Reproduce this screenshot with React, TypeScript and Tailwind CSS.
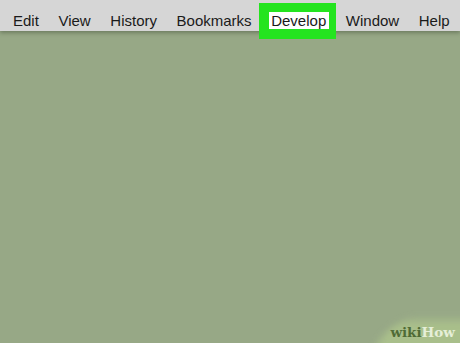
import React from "react";

const items = ["Edit", "View", "History", "Bookmarks", "Develop", "Window", "Help"];

export default function App() {
  return (
    <div
      className="relative w-[460px] h-[343px] overflow-hidden bg-[#97a886]"
      style={{ fontFamily: '"Liberation Sans", Arial, sans-serif' }}
    >
      <div className="absolute left-[380px] top-[320px] w-[110px] h-[40px] bg-[#a9bf8b] blur-[4px] -skew-x-[30deg] rounded-tl-[20px]" />
      <div className="relative h-[31px] bg-[#d6d6d6] shadow-[0_2px_4px_rgba(60,70,50,0.45)]">
        <div className="flex gap-[19.6px] pl-[13px] pt-[12px] text-[15px] leading-[18px] text-[#1a1a1a]">
          {items.map((t) =>
            t === "Develop" ? (
              <span key={t} className="relative">
                <span className="absolute -left-[12px] -right-[10px] -top-[9px] h-[36px] bg-[#24e41f]" />
                <span className="absolute -left-[2px] -right-[3px] top-0 h-[17px] bg-white" />
                <span className="relative">{t}</span>
              </span>
            ) : (
              <span key={t}>{t}</span>
            )
          )}
        </div>
      </div>
      <div
        className="absolute right-[5px] bottom-[4px] text-[13.5px] font-bold leading-none"
        style={{ fontFamily: '"DejaVu Serif", "Liberation Serif", serif' }}
      >
        <span className="text-[#4f6b36]">wiki</span>
        <span className="text-[#e6efd9]">How</span>
      </div>
    </div>
  );
}
